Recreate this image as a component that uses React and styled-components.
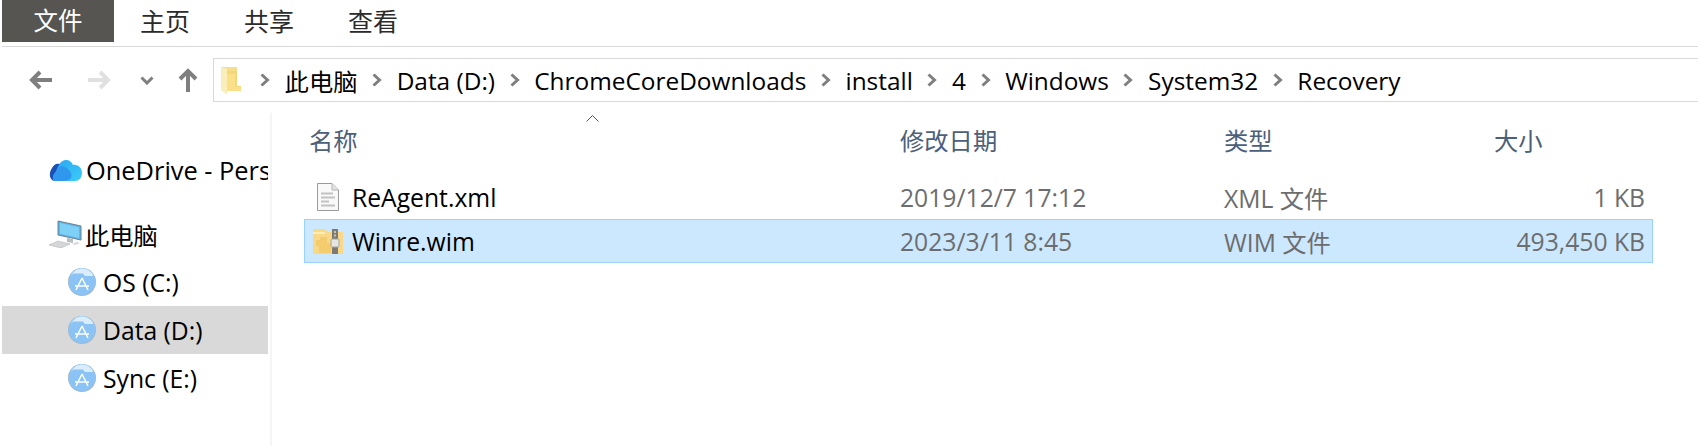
import React from "react";
import styled, { createGlobalStyle } from "styled-components";

const Global = createGlobalStyle`
  html, body {
    margin: 0;
    background: #fff;
  }
  body {
    font-family: "Open Sans", "Noto Sans CJK SC", sans-serif;
    color: #000;
  }
`;

const Page = styled.div`
  width: 1698px;
  height: 446px;
  overflow: hidden;
  background: #fff;
`;

const Ribbon = styled.div`
  display: flex;
  height: 46px;
  margin-left: 2px;
  border-bottom: 1px solid #d9d9d9;
`;

const FileTab = styled.div`
  width: 112px;
  height: 42px;
  margin-right: -1px;
  background: #575552;
  color: #fff;
  font-size: 24.5px;
  line-height: 42px;
  text-align: center;
`;

const Tab = styled.div`
  padding: 0 27px;
  height: 42px;
  line-height: 42px;
  font-size: 25px;
  color: #2b2b2b;
`;

const NavBar = styled.div`
  display: flex;
  align-items: flex-start;
  height: 66px;
  padding: 11px 0 0 12px;
  box-sizing: border-box;
`;

const NavButton = styled.div`
  display: flex;
  align-items: center;
  justify-content: center;
  width: ${({ $w }) => $w}px;
  height: 44px;
  flex: none;
`;

const Address = styled.div`
  display: flex;
  align-items: center;
  flex: 1;
  height: 44px;
  margin-left: 3px;
  padding-left: 7px;
  box-sizing: border-box;
  border: 1px solid #d9d9d9;
  border-right: none;
  font-size: 24.4px;
`;

const Crumb = styled.span`
  white-space: nowrap;
  margin: 0 14.6px;
`;

const Zh = styled.span`
  font-size: 24.3px;
`;

const Body = styled.div`
  display: flex;
`;

const Sidebar = styled.div`
  width: 272px;
  height: 333px;
  box-sizing: border-box;
  padding: 33px 2px 0 2px;
  border-right: 2px solid #f5f5f5;
  flex: none;
`;

const TreeRow = styled.div`
  display: flex;
  align-items: center;
  height: 48px;
  margin-bottom: ${({ $after }) => $after || 0}px;
  padding-left: ${({ $indent }) => $indent}px;
  gap: ${({ $gap }) => $gap}px;
  background: ${({ $active }) => ($active ? "#d9d9d9" : "transparent")};
  font-size: ${({ $size }) => $size || 24.7}px;
  white-space: nowrap;
  overflow: hidden;
`;

const List = styled.div`
  position: relative;
  flex: 1;
  padding: 0 45px 0 32px;
`;

const SortArrow = styled.svg`
  position: absolute;
  left: 314px;
  top: 2px;
`;

const Row = styled.div`
  display: grid;
  grid-template-columns: 595px 324px 270px 1fr;
  align-items: center;
  height: 44px;
  box-sizing: border-box;
  padding-right: 7px;
  border: 1px solid ${({ $selected }) => ($selected ? "#99d1ff" : "transparent")};
  background: ${({ $selected }) => ($selected ? "#cce8ff" : "transparent")};
  font-size: 24.7px;
`;

const HeaderRow = styled(Row)`
  height: 62px;
  padding-bottom: 10px;
  color: #4c607a;
  font-size: 24.3px;
`;

const HeaderName = styled.div`
  padding-left: 4px;
`;

const NameCell = styled.div`
  display: flex;
  align-items: center;
  gap: 7px;
  padding-left: 6px;
`;

const IconBox = styled.div`
  display: flex;
  justify-content: center;
  width: 34px;
`;

const Detail = styled.div`
  color: #6d6d6d;
  white-space: nowrap;
`;

const SizeCell = styled(Detail)`
  text-align: right;
`;

const Chevron = () => (
  <svg width="10" height="14" viewBox="0 0 10 14" style={{ flex: "none" }}>
    <path d="M1.5 1.5 L7.5 7 L1.5 12.5" fill="none" stroke="#7f7f7f" strokeWidth="3" />
  </svg>
);

const BackIcon = ({ color, flip }) => (
  <svg width="24" height="20" viewBox="0 0 24 20" style={flip ? { transform: "scaleX(-1)" } : undefined}>
    <path d="M23 10 H3 M11 2 L3 10 L11 18" fill="none" stroke={color} strokeWidth="4" />
  </svg>
);

const DownIcon = () => (
  <svg width="14" height="9" viewBox="0 0 14 9">
    <path d="M1.5 1.5 L7 7 L12.5 1.5" fill="none" stroke="#7f7f7f" strokeWidth="3" />
  </svg>
);

const UpIcon = () => (
  <svg width="20" height="24" viewBox="0 0 20 24">
    <path d="M10 24 V3 M2 11 L10 3 L18 11" fill="none" stroke="#7f7f7f" strokeWidth="4" />
  </svg>
);

const FolderSmall = () => (
  <svg width="20" height="28" viewBox="0 0 20 28" style={{ flex: "none", marginRight: 19 }}>
    <path d="M0 1 H16 V20 H20 V25 H6 V28 L0 24 Z" fill="#f6dd8a" />
    <path d="M6 3 L0 1 V24 L6 28 Z" fill="#fbeebb" />
    <path d="M6 25 V5 L16 5 V20 H20 V25 Z" fill="#f4d77a" />
    <path d="M6 25 L6 8 L14 8 L14 21 L20 21 V25 Z" fill="#fbe08a" />
  </svg>
);

const CloudIcon = () => (
  <svg width="33" height="23" viewBox="0 0 33 23" style={{ flex: "none" }}>
    <defs>
      <linearGradient id="cloudFront" x1="0" y1="0" x2="1" y2="1">
        <stop offset="0" stopColor="#2aa5f2" />
        <stop offset="1" stopColor="#3ccdf7" />
      </linearGradient>
    </defs>
    <path d="M3 9 C5 5 8 4 11 5 L12 22 H6 C1 22 -1 15 3 9 Z" fill="#1a4fb5" />
    <path d="M10 6 C13 0 21 -1 24 6 C29 5 33 9 33 14 C33 19 30 22 26 22 H7 C3 22 3 17 6 14 C8 11 8 9 10 6 Z" fill="url(#cloudFront)" />
    <path d="M9 9 C12 5 19 8 22 14 C24 19 20 22 15 22 H7 C3 22 3 17 6 14 Z" fill="#2f97ee" />
  </svg>
);

const PcIcon = () => (
  <svg width="33" height="28" viewBox="0 0 33 28" style={{ flex: "none" }}>
    <path d="M9 1 L32 6 V20 L9 15 Z" fill="#5cb8ec" stroke="#6f7f8c" strokeWidth="1" />
    <path d="M11 3 L30 7.5 V18 L11 13.5 Z" fill="#7fd0f7" />
    <path d="M18 18 L24 19 V23 L18 22 Z" fill="#b9bec2" />
    <path d="M9 21 L21 24 L12 28 L0 25 Z" fill="#d4d6d8" stroke="#b5b7b9" strokeWidth="0.6" />
    <path d="M23 24 L28 22 L31 23 L26 25 Z" fill="#d4d6d8" />
  </svg>
);

const DriveIcon = () => (
  <svg width="28" height="28" viewBox="0 0 28 28" style={{ flex: "none" }}>
    <circle cx="14" cy="14" r="14" fill="#b0b4b8" />
    <circle cx="14" cy="13.6" r="13.6" fill="#8ac3f4" />
    <path d="M3 8 C5 3 9 .5 14 .5 C19 .5 23.5 3 25.5 8 H17 L15 5.5 H5 Z" fill="#d9edfc" />
    <path d="M14 10 L8 22 M14 10 L20 22 M7 18 H21" fill="none" stroke="#fff" strokeWidth="1.5" />
  </svg>
);

const DocIcon = () => (
  <svg width="22" height="28" viewBox="0 0 22 28">
    <path d="M.5 .5 H15 L21.5 7 V27.5 H.5 Z" fill="#f9f9f9" stroke="#9a9a9a" />
    <path d="M15 .5 V7 H21.5" fill="#e4e4e4" stroke="#b5b5b5" />
    <path d="M4 10.5 H16 M4 14.5 H18 M4 18.5 H12 M4 22.5 H18" stroke="#c2c2c2" strokeWidth="2" />
  </svg>
);

const ZipFolderIcon = () => (
  <svg width="30" height="25" viewBox="0 0 30 25">
    <path d="M0 0 H12 L15 3 H30 V25 H0 Z" fill="#f9d987" />
    <path d="M0 3 H12 V5 H0 Z" fill="#fdeeb5" />
    <path d="M7 8 H14 V14 H18 V24 H6 V17 H3 V11 H7 Z" fill="#f4cc6e" />
    <rect x="19" y="0" width="6" height="25" fill="#7d7a73" />
    <rect x="18" y="10" width="8" height="8" rx="1" fill="#e4e4e0" stroke="#a5a5a0" />
    <path d="M22 2 V9" stroke="#c7c4ba" strokeWidth="2" strokeDasharray="2 1.5" />
  </svg>
);

const crumbs = ["Data (D:)", "ChromeCoreDownloads", "install", "4", "Windows", "System32", "Recovery"];

const drives = [
  { label: "OS (C:)" },
  { label: "Data (D:)", active: true },
  { label: "Sync (E:)" },
];

export default function App() {
  return (
    <Page>
      <Global />
      <Ribbon>
        <FileTab>文件</FileTab>
        <Tab>主页</Tab>
        <Tab>共享</Tab>
        <Tab>查看</Tab>
      </Ribbon>
      <NavBar>
        <NavButton $w={58}><BackIcon color="#7f7f7f" /></NavButton>
        <NavButton $w={58}><BackIcon color="#e0e0e0" flip /></NavButton>
        <NavButton $w={38}><DownIcon /></NavButton>
        <NavButton $w={44}><UpIcon /></NavButton>
        <Address>
          <FolderSmall />
          <Chevron />
          <Crumb><Zh>此电脑</Zh></Crumb>
          {crumbs.map((c) => (
            <React.Fragment key={c}>
              <Chevron />
              <Crumb>{c}</Crumb>
            </React.Fragment>
          ))}
        </Address>
      </NavBar>
      <Body>
        <Sidebar>
          <TreeRow $indent={47} $gap={4} $after={16} $size={25.4}>
            <CloudIcon />
            OneDrive - Personal
          </TreeRow>
          <TreeRow $indent={47} $gap={3}>
            <PcIcon />
            <Zh>此电脑</Zh>
          </TreeRow>
          {drives.map((d) => (
            <TreeRow key={d.label} $indent={66} $gap={7} $active={d.active}>
              <DriveIcon />
              {d.label}
            </TreeRow>
          ))}
        </Sidebar>
        <List>
          <SortArrow width="13" height="7" viewBox="0 0 13 7">
            <path d="M.5 6.5 L6.5 .5 L12.5 6.5" fill="none" stroke="#555" strokeWidth="1" />
          </SortArrow>
          <HeaderRow>
            <HeaderName>名称</HeaderName>
            <div>修改日期</div>
            <div>类型</div>
            <div>大小</div>
          </HeaderRow>
          <Row>
            <NameCell>
              <IconBox><DocIcon /></IconBox>
              ReAgent.xml
            </NameCell>
            <Detail>2019/12/7 17:12</Detail>
            <Detail>XML <Zh>文件</Zh></Detail>
            <SizeCell>1 KB</SizeCell>
          </Row>
          <Row $selected>
            <NameCell>
              <IconBox><ZipFolderIcon /></IconBox>
              Winre.wim
            </NameCell>
            <Detail>2023/3/11 8:45</Detail>
            <Detail>WIM <Zh>文件</Zh></Detail>
            <SizeCell>493,450 KB</SizeCell>
          </Row>
        </List>
      </Body>
    </Page>
  );
}
